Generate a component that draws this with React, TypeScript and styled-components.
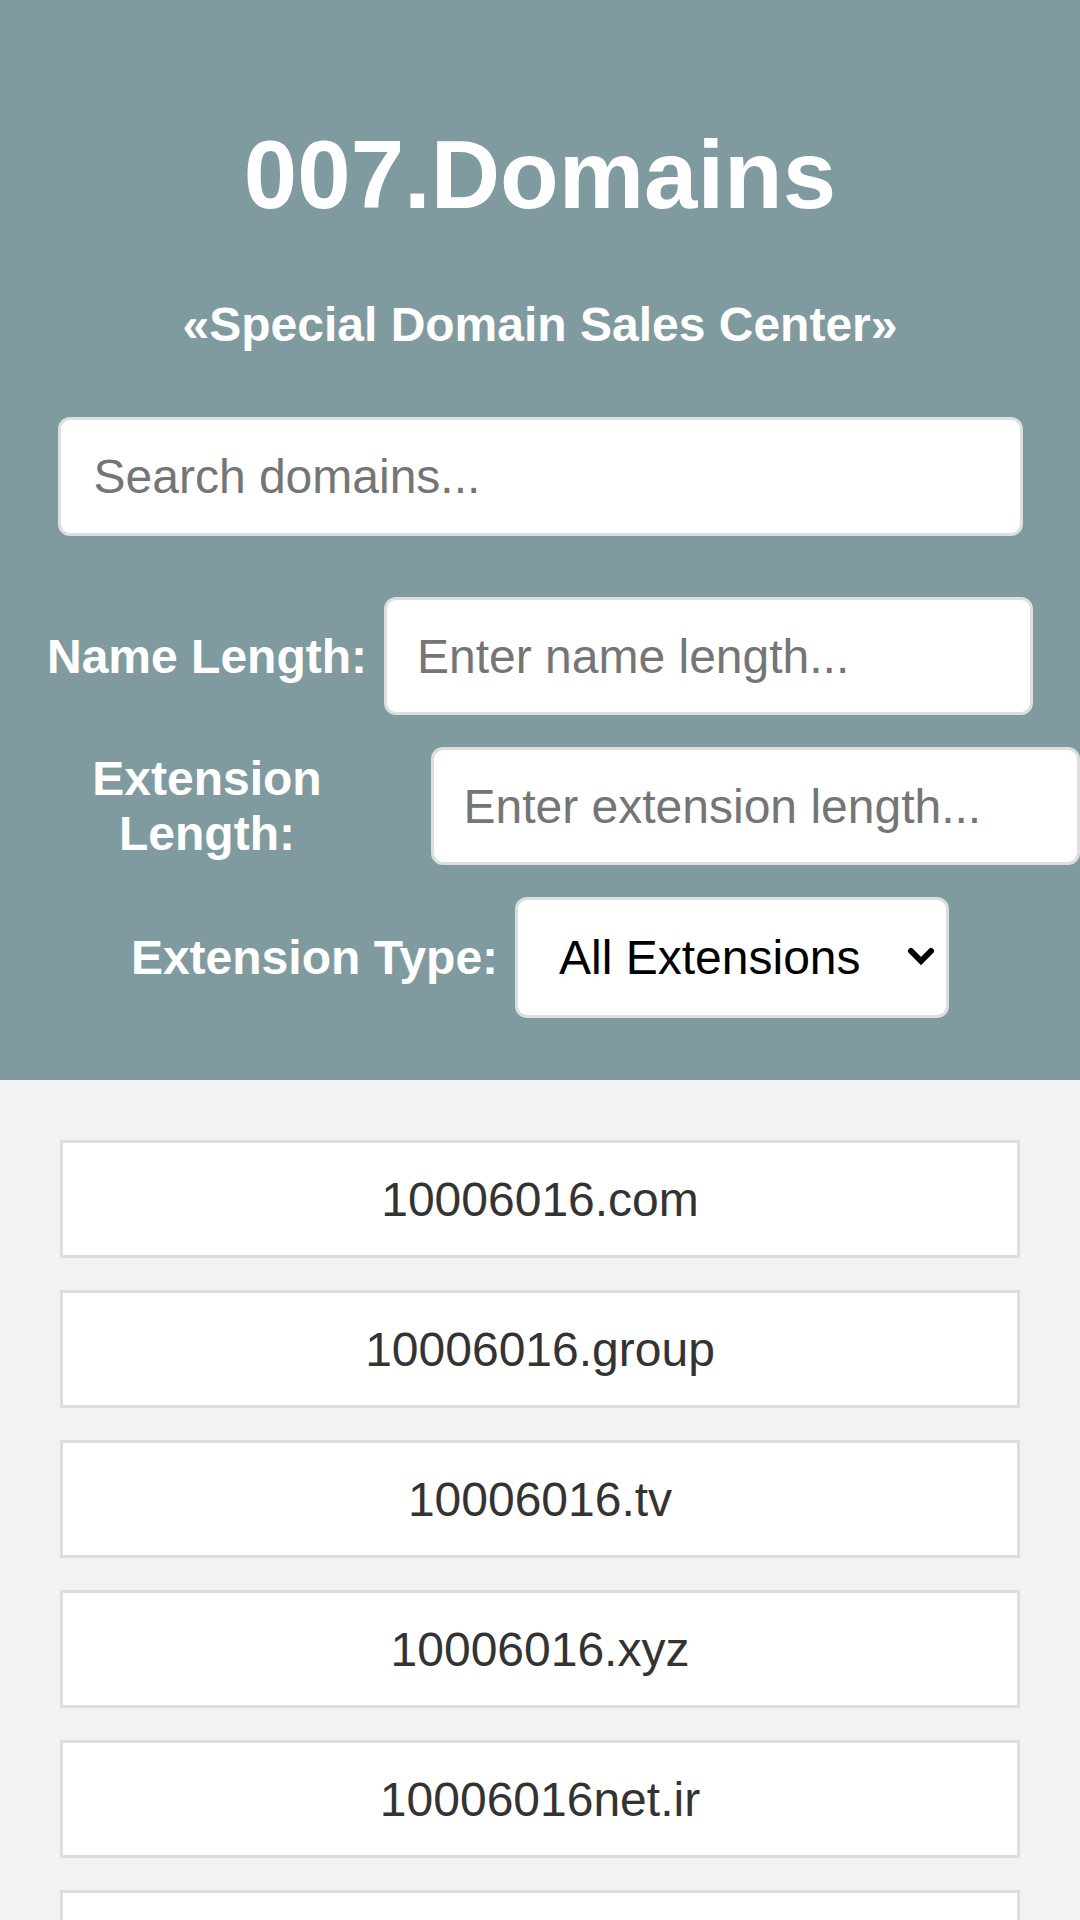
import React from "react";
import styled, { createGlobalStyle } from "styled-components";

const GlobalStyle = createGlobalStyle`
  html, body {
    margin: 0;
    padding: 0;
    background: #f2f2f2;
    font-family: "Liberation Sans", Arial, sans-serif;
  }
  * { box-sizing: border-box; }
`;

const Header = styled.header`
  background: #7f9ba0;
  display: flex;
  flex-direction: column;
  align-items: center;
  padding: 120px 0 62px;
  color: #ffffff;
`;

const Title = styled.h1`
  margin: 0;
  font-size: 96px;
  font-weight: 700;
  line-height: 110px;
  color: #ffffff;
`;

const Subtitle = styled.p`
  margin: 67px 0 0;
  font-size: 48px;
  font-weight: 700;
  line-height: 55px;
  color: #ffffff;
`;

const fieldBase = `
  background: #ffffff;
  border: 3px solid #dcdfdf;
  border-radius: 12px;
  font-family: "Liberation Sans", Arial, sans-serif;
  font-size: 48px;
  outline: none;
  &::placeholder { color: #757575; }
`;

const SearchInput = styled.input`
  ${fieldBase}
  margin-top: 65px;
  width: 965px;
  height: 119px;
  padding: 0 33px;
  color: #333;
`;

const FilterRow = styled.div<{ $gap: number }>`
  margin-top: ${(p) => p.$gap}px;
  width: 100%;
  display: flex;
  justify-content: center;
  align-items: center;
`;

const Label = styled.label<{ $narrow?: boolean }>`
  flex: 0 1 auto;
  margin-right: 17px;
  font-size: 48px;
  font-weight: 700;
  line-height: 55px;
  text-align: center;
  color: #ffffff;
  ${(p) => (p.$narrow ? "max-width: 413px;" : "")}
`;

const FilterInput = styled.input`
  ${fieldBase}
  flex: 0 0 auto;
  width: 649px;
  height: 118px;
  padding: 0 30px;
  color: #333;
`;

const SelectWrap = styled.div`
  position: relative;
  flex: 0 0 auto;
  width: 434px;
  height: 121px;
`;

const Select = styled.select`
  ${fieldBase}
  appearance: none;
  -webkit-appearance: none;
  width: 100%;
  height: 100%;
  padding: 0 80px 0 41px;
  color: #000000;
`;

const Chevron = styled.svg`
  position: absolute;
  right: 14px;
  top: 50px;
  width: 28px;
  height: 20px;
  pointer-events: none;
`;

const List = styled.main`
  padding: 60px 60px 0;
  display: flex;
  flex-direction: column;
  gap: 32px;
`;

const DomainRow = styled.div`
  height: 118px;
  background: #ffffff;
  border: 3px solid #dddddd;
  display: flex;
  align-items: center;
  justify-content: center;
  font-size: 48px;
  color: #333333;
`;

const domains = [
  "10006016.com",
  "10006016.group",
  "10006016.tv",
  "10006016.xyz",
  "10006016net.ir",
  "",
];

export default function App() {
  return (
    <>
      <GlobalStyle />
      <Header>
        <Title>007.Domains</Title>
        <Subtitle>«Special Domain Sales Center»</Subtitle>
        <SearchInput placeholder="Search domains..." />
        <FilterRow $gap={61}>
          <Label>Name Length:</Label>
          <FilterInput placeholder="Enter name length..." />
        </FilterRow>
        <FilterRow $gap={32}>
          <Label $narrow>Extension Length:</Label>
          <FilterInput placeholder="Enter extension length..." />
        </FilterRow>
        <FilterRow $gap={32}>
          <Label>Extension Type:</Label>
          <SelectWrap>
            <Select defaultValue="all">
              <option value="all">All Extensions</option>
            </Select>
            <Chevron viewBox="0 0 28 20">
              <path
                d="M4 4 L14 14 L24 4"
                fill="none"
                stroke="#000"
                strokeWidth="6"
                strokeLinecap="round"
                strokeLinejoin="miter"
              />
            </Chevron>
          </SelectWrap>
        </FilterRow>
      </Header>
      <List>
        {domains.map((d, i) => (
          <DomainRow key={i}>{d}</DomainRow>
        ))}
      </List>
    </>
  );
}
